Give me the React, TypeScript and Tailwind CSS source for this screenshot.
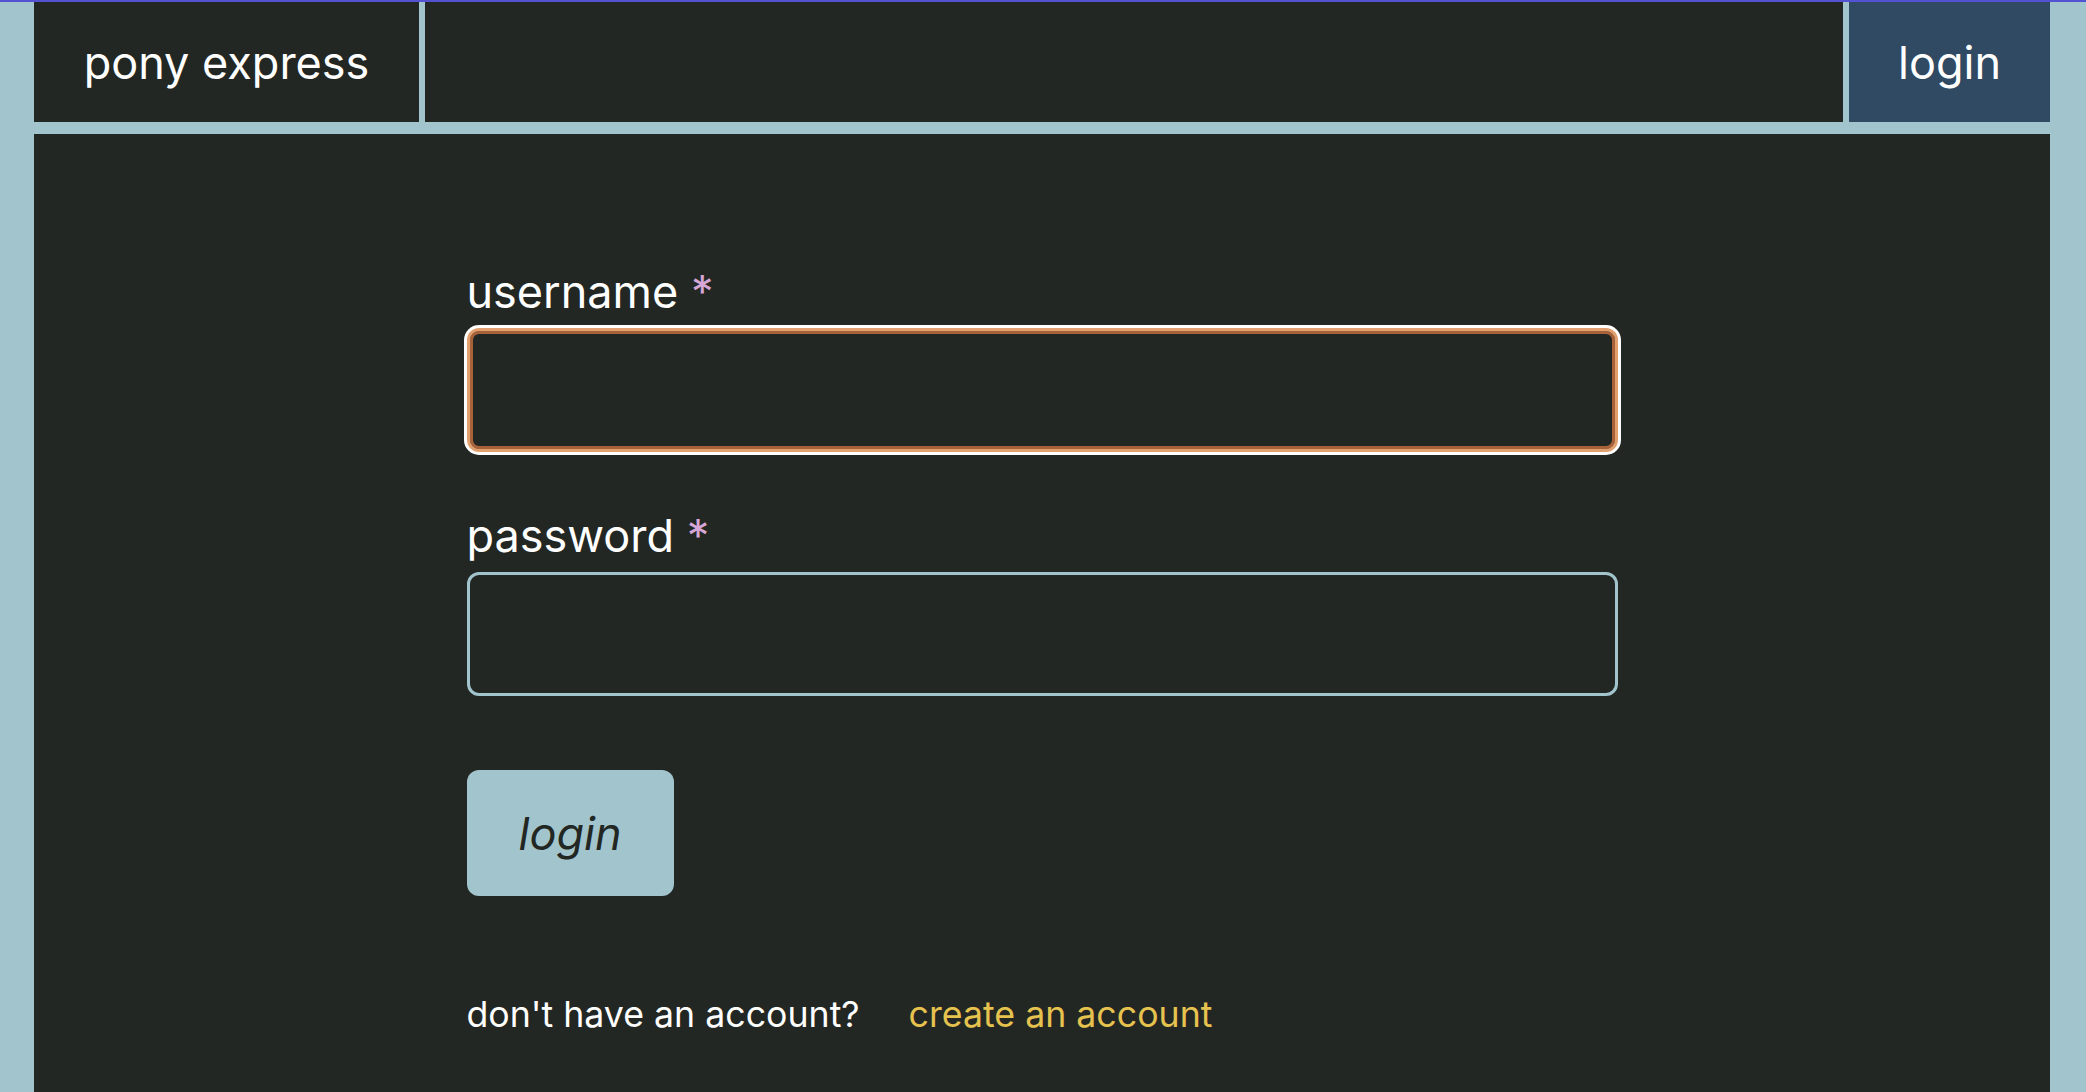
const DARK = 'bg-[#232723]'

function Field({ label, type, focused }: { label: string; type: string; focused?: boolean }) {
  return (
    <label className="flex flex-col">
      <span className="text-[45px] leading-[54px] text-white">
        {label} <span className="text-[#d6a7d6]">*</span>
      </span>
      <input
        type={type}
        className={`mt-[9px] h-[124px] w-full rounded-[12px] border-[3px] bg-[#232723] px-4 text-[40px] text-white outline-none ${
          focused
            ? 'border-[#e3a06f] shadow-[0_0_0_3px_#ffffff,inset_0_0_0_3px_#a8623a]'
            : 'border-[#a1c4cd]'
        }`}
      />
    </label>
  )
}

export default function App() {
  return (
    <div
      className="flex min-h-screen flex-col border-t-2 border-[#5252d2] bg-[#a1c4cd] pl-[34px] pr-[36px]"
      style={{ fontFamily: 'Inter, "Noto Sans", sans-serif' }}
    >
      <header className="flex h-[120px] gap-[6px]">
        <div className={`flex w-[385px] items-center justify-center ${DARK} pt-[2px] text-[45px] text-white`}>
          pony express
        </div>
        <div className={`flex-1 ${DARK}`} />
        <div className="flex w-[201px] items-center justify-center bg-[#2f4a62] pt-[2px] text-[45px] text-white">
          login
        </div>
      </header>

      <main className={`mt-[12px] flex-1 ${DARK}`}>
        <form className="mx-auto flex w-[1151px] flex-col pt-[131px]" onSubmit={(e) => e.preventDefault()}>
          <Field label="username" type="text" focused />
          <div className="mt-[57px]">
            <Field label="password" type="password" />
          </div>
          <button
            type="submit"
            className="mt-[74px] h-[126px] w-[207px] rounded-[12px] bg-[#a1c4cd] pt-[2px] text-[45px] italic text-[#232723]"
          >
            login
          </button>
          <p className="mt-[97px] flex gap-[49px] text-[35.7px] leading-[43px] text-white">
            <span>don't have an account?</span>
            <a href="#" className="text-[#e6c24f]">
              create an account
            </a>
          </p>
        </form>
      </main>
    </div>
  )
}
